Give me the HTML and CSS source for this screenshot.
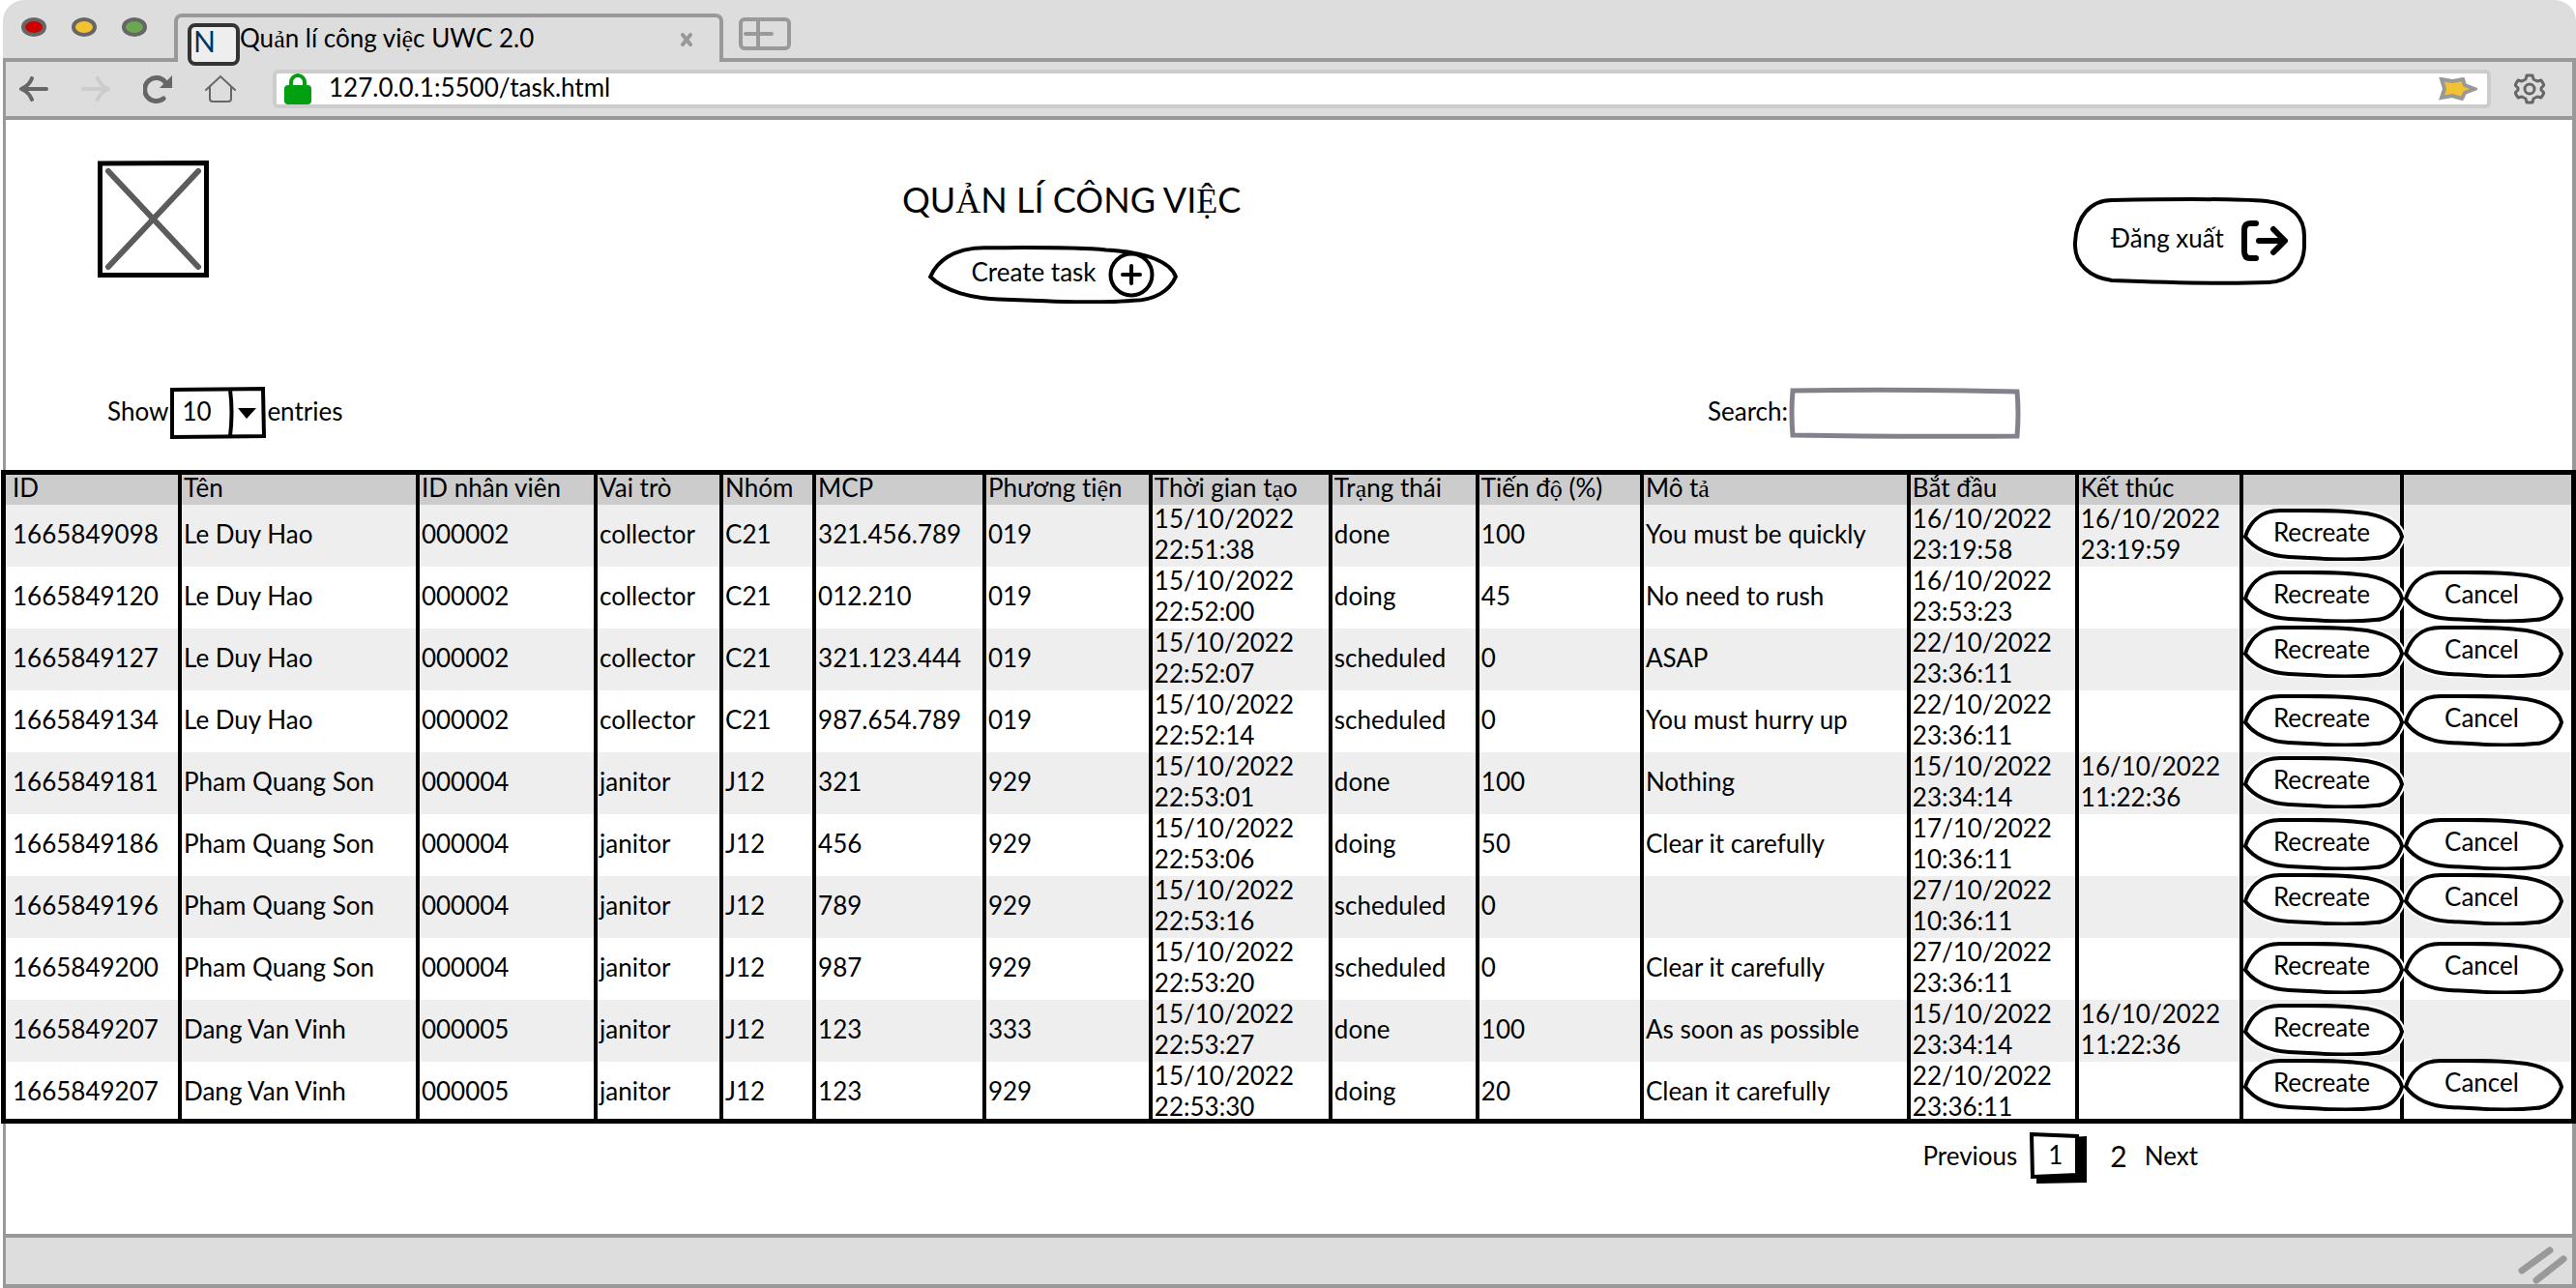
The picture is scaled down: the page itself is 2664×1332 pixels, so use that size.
FILE: index.html
```html
<!DOCTYPE html>
<html lang="vi">
<head>
<meta charset="utf-8">
<meta name="viewport" content="width=device-width, initial-scale=1">
<title>Quản lí công việc UWC 2.0</title>
<link rel="stylesheet" href="styles.css">
</head>
<body>
<svg class="defs" aria-hidden="true">
  <symbol id="pill" viewBox="0 0 166 54" preserveAspectRatio="none">
    <path class="halo" d="M2 29 C6 16 16 2 38 2 C60 2 95 1 118 4 C146 6 161 16 164 29 C160 42 150 51 136 51 C120 53 90 52.500 78 51.500 L47 50 C30 49 12 43 2 29 Z"/>
    <path class="ink" d="M2 29 C6 16 16 2 38 2 C60 2 95 1 118 4 C146 6 161 16 164 29 C160 42 150 51 136 51 C120 53 90 52.500 78 51.500 L47 50 C30 49 12 43 2 29 Z"/>
  </symbol>
</svg>
<div class="browser">
  <header class="tabstrip">
    <div class="lights">
      <svg viewBox="0 0 130 20" aria-hidden="true"><g stroke="#666" stroke-width="4"><ellipse cx="13" cy="10" rx="11" ry="8" fill="#c00"/><ellipse cx="65" cy="10" rx="11" ry="8" fill="#f1c232"/><ellipse cx="117" cy="10" rx="11" ry="8" fill="#6aa84f"/></g></svg>
    </div>
    <div class="tab">
      <span class="favicon">N</span>
      <span class="tab-title">Qu<span class="alt">ả</span>n lí công vi<span class="alt">ệ</span>c UWC 2.0</span>
      <button class="plain tab-close" aria-label="Close tab"><svg width="12" height="14" viewBox="0 0 12 14"><path d="M2 2L10 12M10 2L2 12" fill="none" stroke="#999" stroke-width="4" stroke-linecap="round"/></svg></button>
    </div>
    <button class="plain newtab" aria-label="New tab"><svg width="54" height="34" viewBox="0 0 54 34"><g fill="none" stroke="#999" stroke-width="4" stroke-linecap="round"><rect x="2" y="2" width="50" height="30" rx="4"/><path d="M7 17H34M20 4V31"/></g></svg></button>
  </header>
  <nav class="toolbar">
    <button class="plain" aria-label="Back"><svg width="30" height="26" viewBox="0 0 30 26"><path d="M28 13H3M13 2C11 7 7 11 2 13C7 15 11 19 13 24" fill="none" stroke="#666" stroke-width="4" stroke-linecap="round" stroke-linejoin="round"/></svg></button>
    <button class="plain" aria-label="Forward"><svg width="30" height="26" viewBox="0 0 30 26"><path d="M2 13H27M17 2C19 7 23 11 28 13C23 15 19 19 17 24" fill="none" stroke="#ccc" stroke-width="4" stroke-linecap="round" stroke-linejoin="round"/></svg></button>
    <button class="plain" aria-label="Reload"><svg width="30" height="30" viewBox="0 0 30 30"><path d="M21 25A12 12 0 1 1 23 8" fill="none" stroke="#666" stroke-width="5" stroke-linecap="round"/><path d="M30 1V14H17Z" fill="#666"/></svg></button>
    <button class="plain" aria-label="Home"><svg width="32" height="30" viewBox="0 0 32 30"><path d="M1 16L16 2L31 16M5 13V25Q5 28 8 28H24Q27 28 27 25V13" fill="none" stroke="#666" stroke-width="2" stroke-linecap="round"/></svg></button>
    <div class="address">
      <svg width="28" height="32" viewBox="0 0 28 32" aria-hidden="true"><path d="M7 14V9a7 7 0 0 1 14 0V14" fill="none" stroke="#00a010" stroke-width="4"/><rect y="12" width="28" height="20" rx="4" fill="#00a010"/></svg>
      <input type="text" class="url" aria-label="Address" value="127.0.0.1:5500/task.html">
      <svg width="40" height="24" viewBox="0 0 40 24" aria-hidden="true"><path d="M3 2L14 4L25 2L27 8L37 12L27 16L24 22L14 19L3 21L6 12Z" fill="#f1c232" stroke="#999" stroke-width="4"/></svg>
    </div>
    <button class="plain" aria-label="Settings"><svg width="32" height="32" viewBox="0 0 32 32"><g fill="none" stroke="#666" stroke-width="3" stroke-linejoin="round"><path d="M13 2H19L20 6Q22 7 24 8L28 7L31 12L28 15V17L31 20L28 25L24 24Q22 25 20 26L19 30H13L12 26Q10 25 8 24L4 25L1 20L4 17V15L1 12L4 7L8 8Q10 7 12 6Z"/><circle cx="16" cy="16" r="5"/></g></svg></button>
  </nav>
  <main class="page">
    <section class="masthead">
      <svg class="logo" viewBox="0 0 115 121" role="img" aria-label="Logo"><path d="M2.500 3L112.500 2.500V118.500H2.500Z" fill="#fff" stroke="#000" stroke-width="5"/><path d="M11 11L104 110M104 11L11 110" stroke="#5c5c5f" stroke-width="6" stroke-linecap="round"/></svg>
      <div class="heading">
        <h1>QU<span class="alt">Ả</span>N LÍ CÔNG VI<span class="alt">Ệ</span>C</h1>
        <button class="pill create"><svg class="shape" aria-hidden="true"><use href="#pill"/></svg><span>Create task</span><svg class="icon" width="48" height="48" viewBox="0 0 48 48" aria-hidden="true"><g fill="none" stroke="#000" stroke-width="4" stroke-linecap="round"><circle cx="24" cy="24" r="21.500"/><path d="M15 24H33M24 15V33"/></g></svg></button>
      </div>
      <button class="pill logout"><svg class="shape" viewBox="0 0 241 90" preserveAspectRatio="none" aria-hidden="true"><path class="ink" d="M2 47C3 20 18 3 40 3C90 2 160 1 200 4C228 7 239 22 239 40V52C238 75 222 87 202 88C150 90 90 88 40 86C18 83 1 70 2 47Z"/></svg><span>Đăng xuất</span><svg class="icon" width="48" height="42" viewBox="0 0 48 42" aria-hidden="true"><path d="M15 3H9Q3 3 3 10V32Q3 39 9 39H15M18 21H44M33 9L45 21L33 33" fill="none" stroke="#000" stroke-width="6" stroke-linecap="round" stroke-linejoin="round"/></svg></button>
    </section>
    <section class="controls">
      <label for="length">Show</label>
      <span class="picker">
        <select id="length"><option>10</option></select>
        <svg class="shape" viewBox="0 0 98 52" preserveAspectRatio="none" aria-hidden="true"><path d="M2 2L96 1L97 50L2 51Z M62 2Q65 25 62 50" fill="none" stroke="#000" stroke-width="4"/><path d="M70 21H89L79 32Z"/></svg>
      </span>
      <label for="length">entries</label>
      <label class="search-label" for="search">Search:</label>
      <span class="search-box">
        <input id="search" type="search">
        <svg class="shape" viewBox="0 0 238 52" preserveAspectRatio="none" aria-hidden="true"><path d="M3 3Q110 1 235 4Q237 26 235 50Q110 51 3 49Q1 26 3 3Z" fill="none" stroke="#84818c" stroke-width="5"/></svg>
      </span>
    </section>
    <div class="table-frame">
      <table>
        <colgroup><col class="c-id"><col class="c-name"><col class="c-staff"><col class="c-role"><col class="c-team"><col class="c-mcp"><col class="c-vehicle"><col class="c-created"><col class="c-status"><col class="c-progress"><col class="c-note"><col class="c-start"><col class="c-end"><col class="c-redo"><col class="c-cancel"></colgroup>
        <thead>
          <tr><th>ID</th><th>Tên</th><th>ID nhân viên</th><th>Vai trò</th><th>Nhóm</th><th>MCP</th><th>Phương ti<span class="alt">ệ</span>n</th><th>Thời gian t<span class="alt">ạ</span>o</th><th>Tr<span class="alt">ạ</span>ng thái</th><th>Tiến đ<span class="alt">ộ</span> (%)</th><th>Mô t<span class="alt">ả</span></th><th>Bắt đầu</th><th>Kết thúc</th><th></th><th></th></tr>
        </thead>
        <tbody>
          <tr><td>1665849098</td><td>Le Duy Hao</td><td>000002</td><td>collector</td><td>C21</td><td>321.456.789</td><td>019</td><td><time>15/10/2022 22:51:38</time></td><td>done</td><td>100</td><td>You must be quickly</td><td><time>16/10/2022 23:19:58</time></td><td><time>16/10/2022 23:19:59</time></td><td class="act"><button class="pill"><svg class="shape" aria-hidden="true"><use href="#pill"/></svg><span>Recreate</span></button></td><td></td></tr>
          <tr><td>1665849120</td><td>Le Duy Hao</td><td>000002</td><td>collector</td><td>C21</td><td>012.210</td><td>019</td><td><time>15/10/2022 22:52:00</time></td><td>doing</td><td>45</td><td>No need to rush</td><td><time>16/10/2022 23:53:23</time></td><td></td><td class="act"><button class="pill"><svg class="shape" aria-hidden="true"><use href="#pill"/></svg><span>Recreate</span></button></td><td class="act"><button class="pill"><svg class="shape" aria-hidden="true"><use href="#pill"/></svg><span>Cancel</span></button></td></tr>
          <tr class="raised"><td>1665849127</td><td>Le Duy Hao</td><td>000002</td><td>collector</td><td>C21</td><td>321.123.444</td><td>019</td><td><time>15/10/2022 22:52:07</time></td><td>scheduled</td><td>0</td><td>ASAP</td><td><time>22/10/2022 23:36:11</time></td><td></td><td class="act"><button class="pill"><svg class="shape" aria-hidden="true"><use href="#pill"/></svg><span>Recreate</span></button></td><td class="act"><button class="pill"><svg class="shape" aria-hidden="true"><use href="#pill"/></svg><span>Cancel</span></button></td></tr>
          <tr><td>1665849134</td><td>Le Duy Hao</td><td>000002</td><td>collector</td><td>C21</td><td>987.654.789</td><td>019</td><td><time>15/10/2022 22:52:14</time></td><td>scheduled</td><td>0</td><td>You must hurry up</td><td><time>22/10/2022 23:36:11</time></td><td></td><td class="act"><button class="pill"><svg class="shape" aria-hidden="true"><use href="#pill"/></svg><span>Recreate</span></button></td><td class="act"><button class="pill"><svg class="shape" aria-hidden="true"><use href="#pill"/></svg><span>Cancel</span></button></td></tr>
          <tr><td>1665849181</td><td>Pham Quang Son</td><td>000004</td><td>janitor</td><td>J12</td><td>321</td><td>929</td><td><time>15/10/2022 22:53:01</time></td><td>done</td><td>100</td><td>Nothing</td><td><time>15/10/2022 23:34:14</time></td><td><time>16/10/2022 11:22:36</time></td><td class="act"><button class="pill"><svg class="shape" aria-hidden="true"><use href="#pill"/></svg><span>Recreate</span></button></td><td></td></tr>
          <tr><td>1665849186</td><td>Pham Quang Son</td><td>000004</td><td>janitor</td><td>J12</td><td>456</td><td>929</td><td><time>15/10/2022 22:53:06</time></td><td>doing</td><td>50</td><td>Clear it carefully</td><td><time>17/10/2022 10:36:11</time></td><td></td><td class="act"><button class="pill"><svg class="shape" aria-hidden="true"><use href="#pill"/></svg><span>Recreate</span></button></td><td class="act"><button class="pill"><svg class="shape" aria-hidden="true"><use href="#pill"/></svg><span>Cancel</span></button></td></tr>
          <tr class="raised"><td>1665849196</td><td>Pham Quang Son</td><td>000004</td><td>janitor</td><td>J12</td><td>789</td><td>929</td><td><time>15/10/2022 22:53:16</time></td><td>scheduled</td><td>0</td><td></td><td><time>27/10/2022 10:36:11</time></td><td></td><td class="act"><button class="pill"><svg class="shape" aria-hidden="true"><use href="#pill"/></svg><span>Recreate</span></button></td><td class="act"><button class="pill"><svg class="shape" aria-hidden="true"><use href="#pill"/></svg><span>Cancel</span></button></td></tr>
          <tr><td>1665849200</td><td>Pham Quang Son</td><td>000004</td><td>janitor</td><td>J12</td><td>987</td><td>929</td><td><time>15/10/2022 22:53:20</time></td><td>scheduled</td><td>0</td><td>Clear it carefully</td><td><time>27/10/2022 23:36:11</time></td><td></td><td class="act"><button class="pill"><svg class="shape" aria-hidden="true"><use href="#pill"/></svg><span>Recreate</span></button></td><td class="act"><button class="pill"><svg class="shape" aria-hidden="true"><use href="#pill"/></svg><span>Cancel</span></button></td></tr>
          <tr><td>1665849207</td><td>Dang Van Vinh</td><td>000005</td><td>janitor</td><td>J12</td><td>123</td><td>333</td><td><time>15/10/2022 22:53:27</time></td><td>done</td><td>100</td><td>As soon as possible</td><td><time>15/10/2022 23:34:14</time></td><td><time>16/10/2022 11:22:36</time></td><td class="act"><button class="pill"><svg class="shape" aria-hidden="true"><use href="#pill"/></svg><span>Recreate</span></button></td><td></td></tr>
          <tr class="raised"><td>1665849207</td><td>Dang Van Vinh</td><td>000005</td><td>janitor</td><td>J12</td><td>123</td><td>929</td><td><time>15/10/2022 22:53:30</time></td><td>doing</td><td>20</td><td>Clean it carefully</td><td><time>22/10/2022 23:36:11</time></td><td></td><td class="act"><button class="pill"><svg class="shape" aria-hidden="true"><use href="#pill"/></svg><span>Recreate</span></button></td><td class="act"><button class="pill"><svg class="shape" aria-hidden="true"><use href="#pill"/></svg><span>Cancel</span></button></td></tr>
        </tbody>
      </table>
    </div>
    <nav class="pager">
      <a href="#">Previous</a>
      <a href="#" class="current"><svg class="shape" viewBox="0 0 60 54" preserveAspectRatio="none" aria-hidden="true"><path d="M8 8L60 5V53L8 54Z"/><path d="M3 3L50 5V45L4 47Z" fill="#fff" stroke="#000" stroke-width="4"/></svg><span>1</span></a>
      <a href="#" class="next-number">2</a>
      <a href="#">Next</a>
    </nav>
  </main>
  <footer class="statusbar">
    <svg width="54" height="42" viewBox="0 0 54 42" aria-hidden="true"><path d="M6 28L35 7M21 38L49 16" stroke="#999" stroke-width="7" stroke-linecap="round"/></svg>
  </footer>
</div>
</body>
</html>
```
FILE: styles.css
```css
* { box-sizing: border-box; }

body {
  margin: 0;
  background: #fff;
  color: #000;
  font-family: Lato, "Noto Sans", sans-serif;
  font-size: 26px;
  font-variant-ligatures: none;
  line-height: 32px;
}

button, input, select { font: inherit; color: inherit; }
a { color: inherit; text-decoration: none; }
svg { display: block; flex: none; }

.defs { position: absolute; width: 0; height: 0; }
.alt { font-family: "Liberation Serif", serif; line-height: 0; }
.plain { padding: 0; border: 0; background: none; }

.browser {
  display: flex;
  flex-direction: column;
  min-height: 100vh;
  margin-left: 3px;
}

/* Window chrome */
.tabstrip {
  position: relative;
  z-index: 1;
  display: flex;
  align-items: flex-start;
  height: 64px;
  border-bottom: 4px solid #999;
  border-radius: 22px 22px 0 0;
  background: #ddd;
}

.lights { width: 130px; margin: 18px 28px 0 19px; }

.tab {
  display: flex;
  align-items: flex-start;
  width: 568px;
  height: 50px;
  margin-top: 14px;
  padding: 6px 28px 0 10px;
  border: 4px solid #999;
  border-bottom: 0;
  border-radius: 8px 8px 0 0;
  background: #ddd;
}

.favicon {
  flex: none;
  width: 54px;
  height: 44px;
  padding-left: 2px;
  border: 4px solid #333;
  border-radius: 8px;
  background: #eee;
  color: #036;
  font-size: 30px;
  line-height: 28px;
}

.tab-title { flex: 1; white-space: nowrap; line-height: 30px; }
.tab-close { margin-top: 10px; }
.newtab { margin: 18px 0 0 16px; }

.toolbar {
  display: flex;
  align-items: center;
  gap: 34px;
  height: 60px;
  padding: 0 28px 0 14px;
  border: solid #999;
  border-width: 0 4px 4px 3px;
  background: #ddd;
}

.address {
  display: flex;
  flex: 1;
  align-items: center;
  gap: 18px;
  height: 40px;
  margin: 0 -10px 0 4px;
  padding: 0 10px 0 8px;
  border: 4px solid #ccc;
  border-radius: 6px;
  background: #fff;
}

.url {
  flex: 1;
  min-width: 0;
  height: 30px;
  padding: 0 0 4px;
  border: 0;
  background: none;
}

/* Page */
.page {
  flex: 1;
  border: solid #999;
  border-width: 0 4px 0 3px;
  padding-top: 42px;
}

.masthead {
  display: grid;
  grid-template-columns: 832fr 1211fr 516fr;
  align-items: start;
  padding-left: 95px;
}

.logo { width: 115px; height: 121px; }
.heading { padding-top: 18px; }

h1 {
  margin: 0 0 26px;
  font-size: 36px;
  font-weight: 400;
  line-height: 44px;
}

.shape {
  position: absolute;
  inset: 0;
  width: 100%;
  height: 100%;
  overflow: visible;
  pointer-events: none;
}

.ink, .halo { fill: #fff; stroke: #000; stroke-width: 4px; vector-effect: non-scaling-stroke; }
.halo { stroke: #fff; stroke-width: 8px; }

.pill {
  position: relative;
  display: flex;
  align-items: center;
  justify-content: center;
  height: 54px;
  padding: 0;
  border: 0;
  background: none;
}

.pill span { position: relative; margin-bottom: 6px; }
.pill .icon { position: relative; }

.create { gap: 12px; width: 260px; height: 60px; margin-left: 26px; padding-left: 20px; }
.logout { gap: 18px; width: 241px; height: 90px; margin-top: 38px; padding-left: 20px; }

.controls {
  display: flex;
  align-items: center;
  gap: 2px;
  margin-top: 87px;
  padding: 0 571px 33px 105px;
}

.controls label { margin-bottom: 4px; }
.controls .search-label { margin-left: auto; }

.picker, .search-box { position: relative; height: 52px; }
.picker { width: 98px; }
.search-box { width: 238px; }

.picker select, .search-box input {
  width: 100%;
  height: 52px;
  padding: 0 12px 4px;
  border: 0;
  background: #fff;
  appearance: none;
}

/* Task table */
.table-frame {
  position: relative;
  margin: 0 -4px 0 -5px;
  padding: 4px 5px 0;
  background: #000;
}

.table-frame::after {
  content: "";
  position: absolute;
  inset: 0;
  border: 5px solid #000;
  border-radius: 2px;
  pointer-events: none;
}

table {
  width: 100%;
  table-layout: fixed;
  border-collapse: separate;
  border-spacing: 0;
}

.c-id { width: 6.71%; }
.c-name { width: 9.27%; }
.c-staff { width: 6.94%; }
.c-role { width: 4.9%; }
.c-team { width: 3.62%; }
.c-mcp { width: 6.63%; }
.c-vehicle { width: 6.48%; }
.c-created { width: 7.01%; }
.c-status { width: 5.73%; }
.c-progress { width: 6.41%; }
.c-note { width: 10.4%; }
.c-start { width: 6.56%; }
.c-end { width: 6.41%; }
.c-redo { width: 6.26%; }
.c-cancel { width: 6.67%; }

th, td {
  padding: 0 0 4px 2px;
  border-left: 4px solid #000;
  text-align: left;
  font-weight: 400;
  white-space: nowrap;
}

th:first-child, td:first-child { padding-left: 7px; border-left: 0; }
th { height: 32px; line-height: 28px; background: #ccc; }
td { height: 64px; background: #fff; }
tbody tr:nth-child(odd) td { background: #eee; }

time { display: block; width: min-content; margin: -2px 0; white-space: normal; }

td.act { padding: 0; }
.act .pill { width: calc(100% + 4px); margin: -1px 0 1px; padding-right: 4px; }
.act:last-child { padding-right: 12px; }
.raised .pill { margin: -8px 0 8px; }

/* Pager and status bar */
.pager {
  display: flex;
  align-items: center;
  justify-content: flex-end;
  height: 54px;
  margin: 8px 387px 52px 0;
}

.pager a { margin-bottom: 4px; }
.pager .current { position: relative; width: 60px; height: 54px; margin: 0 24px 0 12px; padding: 8px 0 0 20px; }
.pager .current span { position: relative; }
.pager .next-number { margin: 0 18px 4px 0; font-size: 30px; }

.statusbar {
  display: flex;
  justify-content: flex-end;
  height: 56px;
  padding: 6px 4px 0 0;
  border: 4px solid #999;
  border-left-width: 3px;
  background: #ddd;
}
```
